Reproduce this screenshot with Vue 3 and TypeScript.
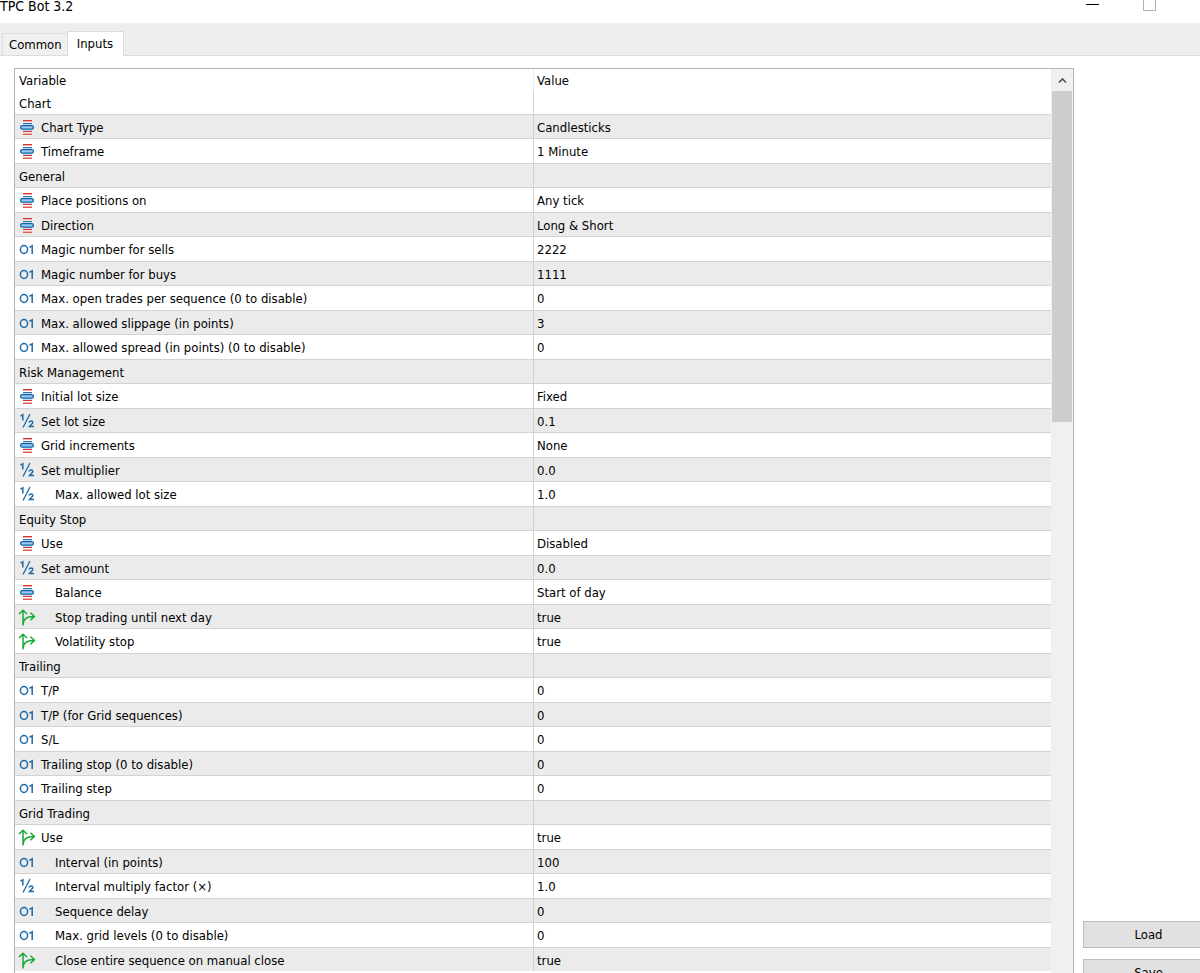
<script setup lang="ts">
import { ref } from 'vue'

type Kind = 'section' | 'enum' | 'int' | 'double' | 'bool'
interface Row {
  kind: Kind
  name: string
  value: string
  nested?: boolean
}

const rows: Row[] = [
  { kind: 'section', name: 'Chart', value: '' },
  { kind: 'enum', name: 'Chart Type', value: 'Candlesticks' },
  { kind: 'enum', name: 'Timeframe', value: '1 Minute' },
  { kind: 'section', name: 'General', value: '' },
  { kind: 'enum', name: 'Place positions on', value: 'Any tick' },
  { kind: 'enum', name: 'Direction', value: 'Long & Short' },
  { kind: 'int', name: 'Magic number for sells', value: '2222' },
  { kind: 'int', name: 'Magic number for buys', value: '1111' },
  { kind: 'int', name: 'Max. open trades per sequence (0 to disable)', value: '0' },
  { kind: 'int', name: 'Max. allowed slippage (in points)', value: '3' },
  { kind: 'int', name: 'Max. allowed spread (in points) (0 to disable)', value: '0' },
  { kind: 'section', name: 'Risk Management', value: '' },
  { kind: 'enum', name: 'Initial lot size', value: 'Fixed' },
  { kind: 'double', name: 'Set lot size', value: '0.1' },
  { kind: 'enum', name: 'Grid increments', value: 'None' },
  { kind: 'double', name: 'Set multiplier', value: '0.0' },
  { kind: 'double', name: 'Max. allowed lot size', value: '1.0', nested: true },
  { kind: 'section', name: 'Equity Stop', value: '' },
  { kind: 'enum', name: 'Use', value: 'Disabled' },
  { kind: 'double', name: 'Set amount', value: '0.0' },
  { kind: 'enum', name: 'Balance', value: 'Start of day', nested: true },
  { kind: 'bool', name: 'Stop trading until next day', value: 'true', nested: true },
  { kind: 'bool', name: 'Volatility stop', value: 'true', nested: true },
  { kind: 'section', name: 'Trailing', value: '' },
  { kind: 'int', name: 'T/P', value: '0' },
  { kind: 'int', name: 'T/P (for Grid sequences)', value: '0' },
  { kind: 'int', name: 'S/L', value: '0' },
  { kind: 'int', name: 'Trailing stop (0 to disable)', value: '0' },
  { kind: 'int', name: 'Trailing step', value: '0' },
  { kind: 'section', name: 'Grid Trading', value: '' },
  { kind: 'bool', name: 'Use', value: 'true' },
  { kind: 'int', name: 'Interval (in points)', value: '100', nested: true },
  { kind: 'double', name: 'Interval multiply factor (×)', value: '1.0', nested: true },
  { kind: 'int', name: 'Sequence delay', value: '0', nested: true },
  { kind: 'int', name: 'Max. grid levels (0 to disable)', value: '0', nested: true },
  { kind: 'bool', name: 'Close entire sequence on manual close', value: 'true', nested: true },
]

const tabs = ['Common', 'Inputs']
const active = ref('Inputs')
</script>

<template>
  <main class="dialog">
    <header class="titlebar">
      <h1 class="title">TPC Bot 3.2</h1>
      <div class="controls">
        <button class="control" type="button" aria-label="Minimize"><span class="minimize"></span></button>
        <button class="control" type="button" aria-label="Maximize"><span class="maximize"></span></button>
      </div>
    </header>

    <nav class="tabs" role="tablist">
      <button
        v-for="tab in tabs"
        :key="tab"
        class="tab"
        :class="{ active: tab === active }"
        type="button"
        role="tab"
        :aria-selected="tab === active"
        @click="active = tab"
      >{{ tab }}</button>
    </nav>

    <div class="body">
      <section class="panel">
        <div class="viewport">
          <table class="grid">
            <thead>
              <tr><th scope="col">Variable</th><th scope="col">Value</th></tr>
            </thead>
            <tbody>
              <tr v-for="(row, i) in rows" :key="i">
                <td>
                  <div class="cell">
                    <svg v-if="row.kind === 'enum'" class="icon" viewBox="0 0 18 18" aria-hidden="true">
                      <path d="M5 1.5h9M5 12.5h9" stroke="#d8322d" />
                      <path d="M5 2.5h9M5 14.5h9" stroke="#efb0ad" />
                      <path d="M5 15.5h9" stroke="#de5d58" />
                      <path d="M5 4.5h9" stroke="#2d74ad" />
                      <path d="M5 5.5h9M5 11.5h9" stroke="#c4dbee" />
                      <rect x="2.6" y="6.6" width="12.8" height="3.6" rx="1.8" fill="#9accf2" stroke="#0f62a5" stroke-width="1.3" />
                    </svg>
                    <svg v-else-if="row.kind === 'int'" class="icon" viewBox="0 0 18 18" aria-hidden="true">
                      <ellipse cx="6" cy="8.5" rx="3.6" ry="3.9" fill="none" stroke="#1d6aa8" stroke-width="1.5" />
                      <path d="M11.4 6.4L14.2 4.8V13" fill="none" stroke="#1d6aa8" stroke-width="1.5" />
                    </svg>
                    <svg v-else-if="row.kind === 'double'" class="icon" viewBox="0 0 18 18" aria-hidden="true">
                      <path d="M2.5 3.2L4.8 1.8V7.5" fill="none" stroke="#1d6aa8" stroke-width="1.5" />
                      <path d="M12 1L5 14.5" fill="none" stroke="#1d6aa8" stroke-width="1.3" />
                      <path d="M11.2 9.5C11.8 7.4 15.2 7.6 14.7 9.9C14.4 11 12.6 12 11.4 13.6H16" fill="none" stroke="#1d6aa8" stroke-width="1.5" />
                    </svg>
                    <svg v-else-if="row.kind === 'bool'" class="icon" viewBox="0 0 18 18" aria-hidden="true">
                      <path d="M5 16.5V1.5M1 5L5 1.2L9 5M5 15.5C5 11 8 7.5 16 7.5M12.5 3.7L16.4 7.5L12.5 11.3" fill="none" stroke="#17ab35" stroke-width="1.5" />
                    </svg>
                    <span :class="{ nested: row.nested }">{{ row.name }}</span>
                  </div>
                </td>
                <td>{{ row.value }}</td>
              </tr>
            </tbody>
          </table>
        </div>
        <div class="scrollbar">
          <button class="scroll-up" type="button" aria-label="Scroll up">
            <svg class="chevron" viewBox="0 0 9 7" aria-hidden="true">
              <path d="M1 5.5L4.5 2L8 5.5" fill="none" stroke="#505050" stroke-width="1.6" />
            </svg>
          </button>
          <div class="thumb"></div>
        </div>
      </section>

      <aside class="actions">
        <button class="action" type="button">Load</button>
        <button class="action" type="button">Save</button>
      </aside>
    </div>
  </main>
</template>

<style>
body {
  margin: 0;
  overflow: hidden;
}
</style>

<style scoped>
.dialog {
  display: flex;
  flex-direction: column;
  height: 100vh;
  overflow: hidden;
  background: #fff;
  color: #000;
  font: 13px/20px "DejaVu Sans Condensed", "DejaVu Sans", sans-serif;
}
button {
  font: inherit;
  color: inherit;
  padding: 0;
  border: 0;
  background: none;
}
.titlebar {
  display: flex;
  justify-content: space-between;
  align-items: flex-start;
  flex: none;
  height: 23px;
}
.title {
  margin: -4px 0 0;
  font-size: 14px;
  font-weight: 400;
}
.controls {
  display: flex;
  margin-right: 22px;
}
.control {
  display: flex;
  justify-content: center;
  align-items: flex-start;
  width: 57px;
  height: 20px;
}
.minimize {
  width: 13px;
  height: 1px;
  margin-top: 4px;
  background: #000;
}
.maximize {
  box-sizing: border-box;
  width: 13px;
  height: 13px;
  margin-top: -2px;
  border: 1px solid #b4b4b4;
}
.tabs {
  display: flex;
  align-items: flex-end;
  flex: none;
  height: 33px;
  padding-left: 2px;
  background: linear-gradient(#dcdcdc, #dcdcdc) bottom / 100% 1px no-repeat #eee;
}
.tab {
  box-sizing: border-box;
  height: 23px;
  padding: 1px 5px 0 6px;
  border: 1px solid #dcdcdc;
  border-right: 0;
  background: #f0f0f0;
}
.tab.active {
  height: 25px;
  padding: 0 10px 1px 9px;
  border-right: 1px solid #dcdcdc;
  border-bottom: 0;
  background: #fff;
}
.body {
  display: flex;
  flex: 1;
  min-height: 0;
  padding: 12px 0 0 14px;
}
.panel {
  display: flex;
  flex: 1;
  min-width: 0;
  border: 1px solid #b2b6bd;
  border-bottom: 0;
  overflow: hidden;
}
.viewport {
  flex: 1;
  min-width: 0;
}
.grid {
  width: 100%;
  table-layout: fixed;
  border-spacing: 0;
}
th,
td {
  box-sizing: border-box;
  height: 25px;
  padding: 2px 4px 0;
  border-top: 1px solid #d2d2d2;
  text-align: left;
  font-weight: 400;
  white-space: nowrap;
}
th {
  height: 22px;
  padding-top: 1px;
  border-top: 0;
}
th + th,
td + td {
  border-left: 1px solid #d2d2d2;
  padding-left: 3px;
}
th + th {
  border-left-color: #ececec;
}
tbody tr:first-child td {
  height: 23px;
  border-top: 0;
}
tbody tr:nth-child(even) td {
  height: 24px;
  background: #ebebeb;
}
.cell {
  display: flex;
  align-items: center;
}
.icon {
  flex: none;
  width: 18px;
  height: 18px;
  margin: 0 5px 0 -1px;
}
.nested {
  padding-left: 14px;
}
.scrollbar {
  flex: none;
  width: 22px;
  background: #f0f0f0;
}
.scroll-up {
  display: flex;
  align-items: center;
  justify-content: center;
  width: 100%;
  height: 22px;
}
.chevron {
  width: 9px;
  height: 7px;
}
.thumb {
  height: 331px;
  margin: 0 1px;
  background: #cdcdcd;
}
.actions {
  display: flex;
  flex-direction: column;
  justify-content: flex-end;
  flex: none;
  gap: 11px;
  box-sizing: border-box;
  width: 126px;
  padding-left: 9px;
  margin-bottom: -13px;
}
.action {
  box-sizing: border-box;
  flex: none;
  width: 131px;
  height: 27px;
  border: 1px solid #bcbcbc;
  background: #e1e1e1;
}
</style>
